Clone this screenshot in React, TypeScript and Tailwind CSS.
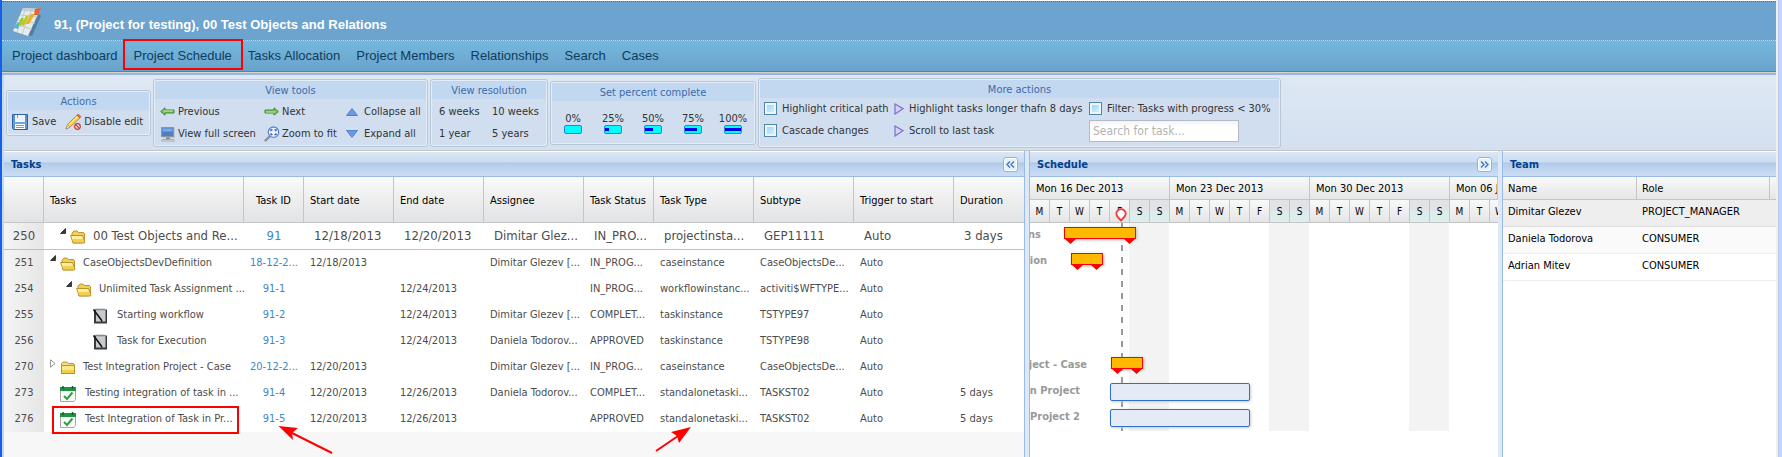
import React from "react";

const FONT = "font-['DejaVu_Sans_Condensed','DejaVu_Sans',sans-serif]";

/* ---------- icons ---------- */

function LogoIcon() {
  return (
    <svg width="32" height="32" viewBox="0 0 32 32" aria-hidden="true">
      <path d="M16 30 L27 9 L29 11 L20 31z" fill="#35536b" opacity=".45" />
      <path d="M11 3 L28 4 L16 31 L1 26z" fill="#e9ebec" />
      <path d="M11 3 L28 4 L27 7 L10 6z" fill="#c9cdd0" />
      <path d="M8 10 L25 12 M6 15 L23 18 M4 20 L20 24 M14 3 L5 27 M20 4 L10 29" stroke="#c3c9cd" strokeWidth="1" />
      <path d="M3 21 L6 17 L8 18 L6 24 L2 23z" fill="#4db5dc" />
      <path d="M9 13 L12 13 L9 21 L6 20z" fill="#9ccc2e" />
      <path d="M14 11 L17 10 L12 21 L9 20z" fill="#b9c92a" />
      <path d="M19 9 L23 9 L17 19 L13 19z" fill="#edb31c" />
      <path d="M23 4 L29 3 L26 10 L22 10z" fill="#e8622a" />
    </svg>
  );
}

function SaveIcon() {
  return (
    <svg width="16" height="16" viewBox="0 0 16 16" aria-hidden="true">
      <path d="M.5 .5h15v15H1.5l-1-1z" fill="#5b93d3" stroke="#2e62a6" />
      <path d="M3 1h10v7H3z" fill="#eef4fb" />
      <path d="M5 1h1v3H5z" fill="#7aa6d8" />
      <path d="M3 10h10v5H3z" fill="#fff" />
      <path d="M4 11h8v1H4zM4 13h8v1H4z" fill="#63b94d" />
      <path d="M1.500 9h13" stroke="#86b1e2" />
    </svg>
  );
}

function EditIcon() {
  return (
    <svg width="17" height="16" viewBox="0 0 17 16" aria-hidden="true">
      <path d="M12 1 L15 4 L5 13 L1 15 L2.500 10.500z" fill="#f5d052" stroke="#a98a2a" strokeWidth=".8" />
      <path d="M12 1 L13.500 .3 L15.800 2.600 L15 4z" fill="#e0675f" stroke="#a5453f" strokeWidth=".6" />
      <path d="M3.500 11.500 L12.500 2.800" stroke="#fff0b0" />
      <path d="M1 15 L2.500 10.500 L5 13z" fill="#f0e3c8" stroke="#777" strokeWidth=".5" />
      <circle cx="12.500" cy="12.500" r="2.800" fill="#f6dede" stroke="#c93a3a" strokeWidth="1.200" />
      <path d="M10.600 10.600 L14.400 14.400" stroke="#c93a3a" strokeWidth="1.200" />
    </svg>
  );
}

function ArrowIcon({ right }: { right?: boolean }) {
  return (
    <svg width="15" height="9" viewBox="0 0 15 9" aria-hidden="true" className={right ? "rotate-180" : ""}>
      <path d="M.7 4.500 L5 .8 V3 H14 V6 H5 V8.200z" fill="#7cc35c" stroke="#3c8a35" strokeWidth="1" />
      <path d="M4 4h9" stroke="#c2e8ab" />
    </svg>
  );
}

function ScreenIcon() {
  return (
    <svg width="16" height="16" viewBox="0 0 16 16" aria-hidden="true">
      <rect x="1.500" y="1.500" width="12" height="9" fill="#4c7fc6" stroke="#8f949c" />
      <path d="M2.500 2.500h10v3h-10z" fill="#7fa9e0" />
      <path d="M14.500 2v9.500H3" stroke="#c4c8ce" fill="none" />
      <path d="M6 11.500h4v2H6z" fill="#85898f" />
      <path d="M2.500 13.500h11l1 1.500h-13z" fill="#e5e7ea" stroke="#8f949c" strokeWidth=".7" />
    </svg>
  );
}

function ZoomIcon() {
  return (
    <svg width="16" height="16" viewBox="0 0 16 16" aria-hidden="true">
      <path d="M1.500 14.500 L5.500 10.500" stroke="#8b9099" strokeWidth="2.400" strokeLinecap="round" />
      <circle cx="9.500" cy="6.200" r="5.200" fill="#eef4ff" stroke="#5b86d2" strokeWidth="1.300" />
      <path d="M7 5.300V3.900h1.500M10.500 3.900H12v1.400M12 7.200v1.400h-1.500M8.500 8.600H7V7.200" stroke="#2746b0" strokeWidth="1.100" fill="none" />
    </svg>
  );
}

function TriangleIcon({ down }: { down?: boolean }) {
  return (
    <svg width="12" height="8" viewBox="0 0 12 8" aria-hidden="true" className={down ? "rotate-180" : ""}>
      <path d="M6 .5 L11.500 7.500 H.5z" fill="#6b9be8" stroke="#4272c4" strokeWidth=".8" />
    </svg>
  );
}

function PlayIcon() {
  return (
    <svg width="10" height="12" viewBox="0 0 10 12" aria-hidden="true">
      <path d="M1 1 L9 5.700 L1 11z" fill="#d5d0f6" stroke="#7b70cc" strokeWidth="1.200" />
    </svg>
  );
}

function FolderOpenIcon() {
  return (
    <svg width="16" height="14" viewBox="0 0 16 14" aria-hidden="true">
      <path d="M2 5 V3 L4 1 H7 L8.500 2.500 H13.500 L14.500 4 V11 L13 13 H3z" fill="#f0cf5a" stroke="#b88a1c" strokeWidth=".9" />
      <path d="M.6 5.500 H12.500 L15 12.800 H3z" fill="#fdf0a0" stroke="#b88a1c" strokeWidth=".9" />
      <path d="M2.500 9 H13.300 L14.300 12.200 H3.500z" fill="#f3cf4e" />
    </svg>
  );
}

function FolderIcon() {
  return (
    <svg width="16" height="14" viewBox="0 0 16 14" aria-hidden="true">
      <path d="M1.500 4 V2.500 L3 1 H7 L8.500 2.500 H13.500 L14.500 4 V12.500 H1.500z" fill="#f5dc7c" stroke="#b88a1c" strokeWidth=".9" />
      <path d="M1.500 4.500 H14.500 V12.500 H1.500z" fill="#fbe88e" stroke="#b88a1c" strokeWidth=".9" />
      <path d="M2 9h12v3H2z" fill="#f1cd4d" />
    </svg>
  );
}

function NoteIcon() {
  return (
    <svg width="16" height="16" viewBox="0 0 16 16" aria-hidden="true">
      <path d="M2 1.500h13v14H2z" fill="#3b3b3b" />
      <path d="M4 2h9.500v11.500H4z" fill="#c9ccce" />
      <path d="M4 .5v2M6 .5v2M8 .5v2M10 .5v2M12 .5v2" stroke="#777" />
      <path d="M1.500 1.500 L9 11.500 L10 13.500" stroke="#151515" strokeWidth="1.600" />
    </svg>
  );
}

function CheckNoteIcon() {
  return (
    <svg width="16" height="16" viewBox="0 0 16 16" aria-hidden="true">
      <path d="M.5 1.500h15v12l-1.500 2H.5z" fill="#fbfbfb" stroke="#a3a8a3" />
      <path d="M0 1h16v4H0z" fill="#1d9440" />
      <path d="M3 0v3M12.500 0v3" stroke="#0b5f24" strokeWidth="1.400" />
      <path d="M4 10 L7 13 L12.500 6.500" stroke="#2ba33f" strokeWidth="2" fill="none" />
    </svg>
  );
}

function ExpandedMark() {
  return (
    <svg width="6" height="6" viewBox="0 0 6 6" aria-hidden="true">
      <path d="M5.500 .5 V5.500 H.5z" fill="#3a3a3a" stroke="#222" strokeWidth=".8" />
    </svg>
  );
}

function CollapsedMark() {
  return (
    <svg width="6" height="9" viewBox="0 0 6 9" aria-hidden="true">
      <path d="M.6 .8 L5 4.500 L.6 8.200z" fill="#fff" stroke="#8a8a8a" strokeWidth=".9" />
    </svg>
  );
}

/* ---------- toolbar ---------- */

function Group({ title, children, width, body }: { title: string; children: React.ReactNode; width: string; body: string }) {
  return (
    <section className={`flex-none rounded-[3px] border border-[#b7c7d7] bg-[#d0def0] ${width}`}>
      <div className="rounded-[2px] border border-[#e3edf8]">
        <h2 className="h-[18px] bg-[#c2d8f0] text-center leading-[19px] text-[#3e6aaa]">{title}</h2>
        <div className={body}>{children}</div>
      </div>
    </section>
  );
}

function Tool({ icon, label, narrow }: { icon?: React.ReactNode; label: string; narrow?: boolean }) {
  return (
    <button type="button" className="flex h-[22px] items-center whitespace-nowrap">
      {icon && <span className={`flex flex-none ${narrow ? "w-[15px]" : "w-[18px]"}`}>{icon}</span>}
      {label}
    </button>
  );
}

function Check({ id, label }: { id: string; label: string }) {
  return (
    <div className="flex h-[22px] items-center gap-[5px] whitespace-nowrap">
      <input
        id={id}
        type="checkbox"
        className="size-[13px] flex-none appearance-none border border-[#4e87ab] bg-[linear-gradient(135deg,#8fd0f7,#e4f4fd)] shadow-[inset_0_0_0_2px_#eef6fb] checked:bg-[#4e87ab]"
      />
      <label htmlFor={id}>{label}</label>
    </div>
  );
}

const percents = [0, 25, 50, 75, 100];

function Toolbar() {
  return (
    <div className="flex h-[76px] items-center gap-[2px] overflow-hidden border-b border-[#c5c5c5] bg-linear-to-b from-[#dfe8f4] to-[#d3e0f0] px-[2px] text-[#333]">
      <Group title="Actions" width="w-[145px]" body="flex h-[24px] items-center gap-[9px] pl-1">
        <button type="button" className="flex items-center gap-1">
          <SaveIcon />
          Save
        </button>
        <button type="button" className="flex items-center gap-[2px] whitespace-nowrap">
          <EditIcon />
          Disable edit
        </button>
      </Group>
      <Group title="View tools" width="w-[275px]" body="grid grid-cols-[104px_82px_auto] pt-[2px] pl-[5px]">
        <Tool icon={<ArrowIcon />} label="Previous" />
        <Tool icon={<ArrowIcon right />} label="Next" />
        <Tool icon={<TriangleIcon />} label="Collapse all" />
        <Tool icon={<ScreenIcon />} label="View full screen" />
        <Tool icon={<ZoomIcon />} label="Zoom to fit" />
        <Tool icon={<TriangleIcon down />} label="Expand all" />
      </Group>
      <Group title="View resolution" width="w-[118px]" body="grid grid-cols-[53px_auto] pt-[2px] pl-[7px]">
        <Tool label="6 weeks" />
        <Tool label="10 weeks" />
        <Tool label="1 year" />
        <Tool label="5 years" />
      </Group>
      <Group title="Set percent complete" width="w-[206px]" body="flex h-[42px] items-end pl-px pb-[9px]">
        {percents.map((p) => (
          <button key={p} type="button" className="flex w-[40px] flex-none flex-col items-center leading-[12px]">
            {p}%
            <span className="flex h-[9px] w-[18px] items-center rounded-[2px] border border-[#2f7fdc] bg-[#00ffff]">
              <span className="h-[3px] bg-[#0000f0]" style={{ width: `${p}%` }} />
            </span>
          </button>
        ))}
      </Group>
      <Group title="More actions" width="w-[523px]" body="grid grid-cols-[130px_195px_auto] pb-[4px] pl-1">
        <Check id="critical" label="Highlight critical path" />
        <Tool narrow icon={<PlayIcon />} label="Highlight tasks longer thafn 8 days" />
        <Check id="filter" label="Filter: Tasks with progress < 30%" />
        <Check id="cascade" label="Cascade changes" />
        <Tool narrow icon={<PlayIcon />} label="Scroll to last task" />
        <input
          type="text"
          aria-label="Search for task"
          placeholder="Search for task..."
          className="h-[22px] w-[150px] border border-[#b5b8c8] bg-linear-to-b from-[#f3f3f3] to-white to-30% px-[3px] text-[12px] placeholder:text-[#b3b3b3]"
        />
      </Group>
    </div>
  );
}

/* ---------- panels ---------- */

function PanelHeader({ title, toggle, label }: { title: string; toggle?: "left" | "right"; label?: string }) {
  return (
    <div className="flex h-[26px] items-center justify-between border-t border-b border-t-white border-b-[#99bbe8] bg-[linear-gradient(to_bottom,#dae7f5,#cbddf1_42%,#a9c6ec_46%,#b6ceec_52%,#ccdef4)] pr-[6px] pl-[7px]">
      <h2 className="font-bold text-[#04408c]">{title}</h2>
      {toggle && (
        <button
          type="button"
          aria-label={label}
          className="flex size-[15px] items-center justify-center rounded-[3px] border border-[#8fb4e4] bg-[#e3f1fc] shadow-[inset_0_0_0_1px_#fff]"
        >
          <svg width="9" height="7" viewBox="0 0 9 7" className={toggle === "right" ? "rotate-180" : ""}>
            <path d="M4 .5 L1 3.500 L4 6.500 M8 .5 L5 3.500 L8 6.500" stroke="#3f73b3" strokeWidth="1.300" fill="none" />
          </svg>
        </button>
      )}
    </div>
  );
}

type Row = {
  n: number;
  mark?: "open" | "closed";
  indent: string;
  icon: React.ReactNode;
  gap: string;
  name: string;
  id: string;
  cells: string[];
};

const rows: Row[] = [
  { n: 250, mark: "open", indent: "pl-[16px]", icon: <FolderOpenIcon />, gap: "gap-[7px]", name: "00 Test Objects and Re...", id: "91", cells: ["12/18/2013", "12/20/2013", "Dimitar Glez...", "IN_PRO...", "projectinsta...", "GEP11111", "Auto", "3 days"] },
  { n: 251, mark: "open", indent: "pl-[6px]", icon: <FolderOpenIcon />, gap: "gap-[7px]", name: "CaseObjectsDevDefinition", id: "18-12-2...", cells: ["12/18/2013", "", "Dimitar Glezev [...", "IN_PROG...", "caseinstance", "CaseObjectsDe...", "Auto", ""] },
  { n: 254, mark: "open", indent: "pl-[22px]", icon: <FolderOpenIcon />, gap: "gap-[7px]", name: "Unlimited Task Assignment ...", id: "91-1", cells: ["", "12/24/2013", "", "IN_PROG...", "workflowinstanc...", "activiti$WFTYPE...", "Auto", ""] },
  { n: 255, indent: "pl-[38px]", icon: <NoteIcon />, gap: "gap-[9px]", name: "Starting workflow", id: "91-2", cells: ["", "12/24/2013", "Dimitar Glezev [...", "COMPLET...", "taskinstance", "TSTYPE97", "Auto", ""] },
  { n: 256, indent: "pl-[38px]", icon: <NoteIcon />, gap: "gap-[9px]", name: "Task for Execution", id: "91-3", cells: ["", "12/24/2013", "Daniela Todorov...", "APPROVED", "taskinstance", "TSTYPE98", "Auto", ""] },
  { n: 270, mark: "closed", indent: "pl-[6px]", icon: <FolderIcon />, gap: "gap-[7px]", name: "Test Integration Project - Case", id: "20-12-2...", cells: ["12/20/2013", "", "Dimitar Glezev [...", "IN_PROG...", "caseinstance", "CaseObjectsDe...", "Auto", ""] },
  { n: 273, indent: "pl-[6px]", icon: <CheckNoteIcon />, gap: "gap-[9px]", name: "Testing integration of task in ...", id: "91-4", cells: ["12/20/2013", "12/26/2013", "Daniela Todorov...", "COMPLET...", "standalonetaski...", "TASKST02", "Auto", "5 days"] },
  { n: 276, indent: "pl-[6px]", icon: <CheckNoteIcon />, gap: "gap-[9px]", name: "Test Integration of Task in Pr...", id: "91-5", cells: ["12/20/2013", "12/26/2013", "", "APPROVED", "standalonetaski...", "TASKST02", "Auto", "5 days"] },
];

const headers = ["", "Tasks", "Task ID", "Start date", "End date", "Assignee", "Task Status", "Task Type", "Subtype", "Trigger to start", "Duration"];

function TasksPanel() {
  return (
    <section className="w-[1021px] flex-none overflow-hidden border-r border-[#99bbe8] bg-[#f7f7f7]">
      <PanelHeader title="Tasks" toggle="left" label="Collapse tasks" />
      <table className="w-full table-fixed border-separate border-spacing-0 text-left">
        <colgroup>
          <col className="w-[40px]" />
          <col className="w-[200px]" />
          <col className="w-[60px]" />
          <col className="w-[90px]" />
          <col className="w-[90px]" />
          <col className="w-[100px]" />
          <col className="w-[70px]" />
          <col className="w-[100px]" />
          <col className="w-[100px]" />
          <col className="w-[100px]" />
          <col />
        </colgroup>
        <thead>
          <tr className="h-[46px] bg-linear-to-b from-[#fafafa] to-[#e1e2e4] whitespace-nowrap text-black">
            {headers.map((h, i) => (
              <th key={i} className={`border-r border-b border-[#c5c5c5] pt-[2px] font-normal last:border-r-0 ${i === 2 ? "text-center" : "pl-[6px]"}`}>
                {h}
              </th>
            ))}
          </tr>
        </thead>
        <tbody className="whitespace-nowrap text-[#4c4c4c]">
          {rows.map((r, i) => {
            const big = i === 0;
            const line = big ? "border-b border-[#c0c0c0] pb-[2px]" : "pb-[2px]";
            return (
              <tr key={r.n} className={big ? "h-[27px] bg-white text-[13px]" : "h-[26px] bg-white"}>
                <td className={`bg-linear-to-r from-[#f4f4f4] to-[#e6e6e6] text-center ${line}`}>{r.n}</td>
                <td className={line}>
                  <div className={`flex h-[20px] items-center ${r.gap} ${r.indent}`}>
                    <span className="flex items-center gap-1">
                      <span className="flex h-[14px] w-[6px] items-start">
                        {r.mark === "open" && <ExpandedMark />}
                        {r.mark === "closed" && <CollapsedMark />}
                      </span>
                      <span className="flex pt-[3px]">{r.icon}</span>
                    </span>
                    <span>{r.name}</span>
                  </div>
                </td>
                <td className={`text-center ${line}`}>
                  <a href="#task" className="text-[#3d87c8]">{r.id}</a>
                </td>
                {r.cells.map((c, k) => (
                  <td key={k} className={`${line} ${big ? "pl-[10px]" : "pl-[6px]"}`}>{c}</td>
                ))}
              </tr>
            );
          })}
        </tbody>
      </table>
    </section>
  );
}

const workWeek = ["M", "T", "W", "T", "F", "S", "S"];
const weeks = [
  { label: "Mon 16 Dec 2013", days: workWeek },
  { label: "Mon 23 Dec 2013", days: workWeek },
  { label: "Mon 30 Dec 2013", days: workWeek },
  { label: "Mon 06 Jan", days: ["M", "T", "W"] },
];

function GroupBar({ place, label, labelPlace }: { place: string; label: string; labelPlace: string }) {
  return (
    <>
      <span className={`absolute font-bold whitespace-nowrap text-[#999] ${labelPlace}`}>{label}</span>
      <div className={`absolute h-[12px] border border-[#ff0000] bg-[#ffb900] shadow-[1px_1px_3px_#bbb] ${place}`}>
        <svg className="absolute top-[10px] left-0" width="11" height="6" viewBox="0 0 11 6">
          <path d="M0 1h11L5.500 6z" fill="#f00" />
        </svg>
        <svg className="absolute top-[10px] right-0" width="11" height="6" viewBox="0 0 11 6">
          <path d="M0 1h11L5.500 6z" fill="#f00" />
        </svg>
      </div>
    </>
  );
}

function TaskBar({ place, label, labelPlace }: { place: string; label: string; labelPlace: string }) {
  return (
    <>
      <span className={`absolute font-bold whitespace-nowrap text-[#999] ${labelPlace}`}>{label}</span>
      <div className={`absolute left-[80px] h-[18px] w-[140px] rounded-[2px] border border-[#2f6fcf] bg-[#e4ebf6] shadow-[1px_1px_3px_#ccc] ${place}`} />
    </>
  );
}

function SchedulePanel() {
  return (
    <section className="min-w-0 flex-1 overflow-hidden border-l border-[#99bbe8] bg-white">
      <PanelHeader title="Schedule" toggle="right" label="Collapse schedule" />
      <div className="relative overflow-hidden">
        <div className="flex text-black">
          {weeks.map((w) => (
            <div key={w.label} className={w.days.length === 7 ? "w-[140px] flex-none" : "min-w-0 flex-1"}>
              <div className="h-[23px] overflow-hidden border-r border-b border-[#c5c5c5] bg-linear-to-b from-[#f9f9f9] to-[#e4e5e7] pl-[6px] leading-[23px] whitespace-nowrap">
                {w.label}
              </div>
              <div className="flex overflow-hidden">
                {w.days.map((d, i) => (
                  <div
                    key={i}
                    className={`h-[23px] w-[20px] flex-none border-r border-b border-[#c5c5c5] text-center text-[10px] leading-[23px] ${
                      i > 4 ? "bg-[linear-gradient(to_bottom,#e2e3e5_50%,#dceeec_50%)]" : "bg-linear-to-b from-[#f9f9f9] to-[#e4e5e7]"
                    }`}
                  >
                    {d}
                  </div>
                ))}
              </div>
              <div className="h-[208px] pl-[99px]">
                {w.days.length === 7 && <div className="h-full w-[40px] bg-[#f3f3f3]" />}
              </div>
            </div>
          ))}
        </div>
        <svg className="absolute top-[31px] left-[85px]" width="12" height="14" viewBox="0 0 12 14" aria-hidden="true">
          <path d="M6 12.500 L2.400 8.600 A4.600 4.600 0 1 1 9.600 8.600z" fill="#fff" stroke="#f03c3c" strokeWidth="2" strokeLinejoin="round" />
        </svg>
        <div className="absolute top-[46px] left-[91px] h-[208px] w-[2px] bg-[repeating-linear-gradient(to_bottom,#999_0px,#999_4px,transparent_4px,transparent_10px,#999_10px,#999_12px)]" />
        <GroupBar place="top-[50px] left-[34px] w-[72px]" label="Relations" labelPlace="top-[50px] left-[10px] -translate-x-full ml-px" />
        <GroupBar place="top-[76px] left-[41px] w-[32px]" label="Definition" labelPlace="top-[76px] left-[17px] -translate-x-full" />
        <GroupBar place="top-[180px] left-[81px] w-[32px]" label="Project - Case" labelPlace="top-[180px] left-[57px] -translate-x-full" />
        <TaskBar place="top-[206px]" label="in Project" labelPlace="top-[206px] left-[50px] -translate-x-full" />
        <TaskBar place="top-[232px]" label="Project 2" labelPlace="top-[232px] left-[50px] -translate-x-full" />
      </div>
    </section>
  );
}

const team = [
  ["Dimitar Glezev", "PROJECT_MANAGER", "bg-[#eeeeee] border-[#dcdcdc]"],
  ["Daniela Todorova", "CONSUMER", "bg-[#fafafa] border-[#ededed]"],
  ["Adrian Mitev", "CONSUMER", "bg-white border-[#ededed]"],
];

function TeamPanel() {
  return (
    <section className="w-[274px] flex-none overflow-hidden border-l border-[#99bbe8] bg-white">
      <PanelHeader title="Team" />
      <table className="w-full table-fixed border-separate border-spacing-0 text-left text-black">
        <colgroup>
          <col className="w-[134px]" />
          <col className="w-[133px]" />
          <col />
        </colgroup>
        <thead>
          <tr className="h-[23px] bg-linear-to-b from-[#f9f9f9] to-[#e4e5e7]">
            <th className="border-r border-b border-[#c5c5c5] pl-[5px] font-normal">Name</th>
            <th className="border-r border-b border-[#c5c5c5] pl-[5px] font-normal">Role</th>
            <td className="border-b border-[#c5c5c5]" />
          </tr>
        </thead>
        <tbody>
          {team.map(([name, role, tone]) => (
            <tr key={name} className="h-[27px] align-top">
              <td className={`border-b pt-[4px] pl-[5px] ${tone}`}>{name}</td>
              <td colSpan={2} className={`border-b pt-[4px] pl-[5px] ${tone}`}>{role}</td>
            </tr>
          ))}
        </tbody>
      </table>
    </section>
  );
}

/* ---------- page ---------- */

const nav = ["Project dashboard", "Project Schedule", "Tasks Allocation", "Project Members", "Relationships", "Search", "Cases"];

export default function App() {
  return (
    <div className={`relative flex min-h-screen overflow-hidden bg-white text-[11px] leading-[15px] ${FONT}`}>
      <div className="w-[2px] flex-none bg-[#1560e8]" />
      <main className="flex min-w-0 flex-1 flex-col">
        <header className="font-['Liberation_Sans',Arial,sans-serif]">
          <div className="mt-px flex h-[40px] items-center border-t border-b border-dotted border-t-[#3f7f6c] border-b-[#c4dff0] bg-[#6ca3cf] pl-[10px]">
            <LogoIcon />
            <h1 className="pt-[6px] pl-[10px] text-[13px] font-bold text-white">91, (Project for testing), 00 Test Objects and Relations</h1>
          </div>
          <nav className="flex h-[31px] items-center gap-[16px] border-b border-[#4a86b0] bg-linear-to-b from-[#75b8dc] to-[#69a2cd] pb-[2px] pl-[10px] text-[13px] whitespace-nowrap text-[#0f3c5c]">
            {nav.map((n) => (
              <a key={n} href="#nav">{n}</a>
            ))}
          </nav>
        </header>
        <div className="flex flex-1 flex-col border-t border-t-[#d5d3cb]">
          <div className="h-[2px] bg-[#94b7e8]" />
          <div className="flex flex-1 flex-col border-l-2 border-[#c5d8f2]">
            <Toolbar />
            <div className="flex flex-1 gap-[4px] bg-[#dfe8f6]">
              <TasksPanel />
              <SchedulePanel />
              <TeamPanel />
            </div>
          </div>
        </div>
      </main>
      <div className="flex w-[6px] flex-none items-center justify-end border-l-2 border-[#f1eee6] bg-linear-to-r from-[#b4c8f8] to-[#c8d6fc] to-50%" />

      <div className="pointer-events-none absolute top-[39px] left-[123px] h-[31px] w-[120px] border-2 border-[#ff0000]" />
      <div className="pointer-events-none absolute top-[406px] left-[52px] h-[28px] w-[187px] border-2 border-[#ff0000]" />
      <svg className="pointer-events-none absolute top-[424px] left-[276px]" width="60" height="32" viewBox="276 424 60 32" aria-hidden="true">
        <path d="M332 453 L292 433" stroke="#f00" strokeWidth="2" />
        <path d="M278.500 426 L298 428 L292 433 L293 440z" fill="#f00" />
      </svg>
      <svg className="pointer-events-none absolute top-[424px] left-[652px]" width="42" height="30" viewBox="652 424 42 30" aria-hidden="true">
        <path d="M656 451 L678 436" stroke="#f00" strokeWidth="2" />
        <path d="M691 427 L671 432 L677 436 L679 443z" fill="#f00" />
      </svg>
    </div>
  );
}
